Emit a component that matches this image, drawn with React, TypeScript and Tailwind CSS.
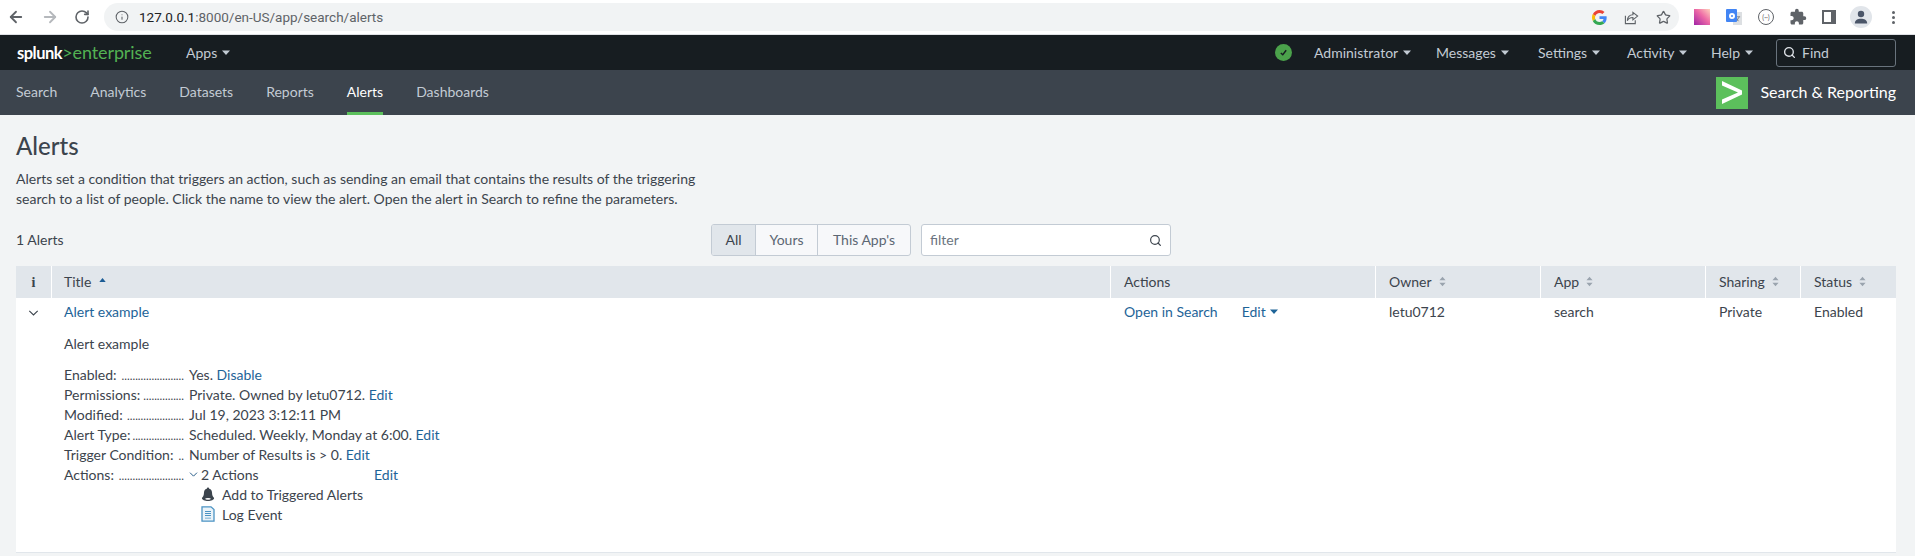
import React from "react";
import { ArrowLeft, ArrowRight, RotateCw, Info, Star, Search } from "lucide-react";
import { MdExtension } from "react-icons/md";

const Caret = ({ className = "" }: { className?: string }) => (
  <svg viewBox="0 0 10 6" className={"w-[8px] h-[5px] fill-current " + className}><path d="M0 0.5h10L5 6z" /></svg>
);

const Chevron = ({ className = "" }: { className?: string }) => (
  <svg viewBox="0 0 10 6" className={"fill-none stroke-current " + className} strokeWidth={1.1}><path d="M.8.8L5 5 9.200.8" /></svg>
);

const SortIcon = () => (
  <svg viewBox="0 0 8 12" className="w-[7px] h-[11px] fill-[#9aa4ae] ml-[7px]"><path d="M4 0.5L7.5 4.5H.5zM4 11.5L.5 7.5h7z" /></svg>
);

const TopItem = ({ label, w }: { label: string; w: string }) => (
  <div className={"flex items-center gap-[5px] " + w}>
    <span>{label}</span>
    <Caret />
  </div>
);

const Tab = ({ label, active }: { label: string; active?: boolean }) => (
  <div className={"relative h-full flex items-center pb-[3px] " + (active ? "text-white" : "text-[#c3cbd4]")}>
    {label}
    {active && <div className="absolute left-0 right-0 bottom-0 h-[3px] bg-[#5cc05c]" />}
  </div>
);

const Link = ({ children }: { children: React.ReactNode }) => <span className="text-[#1e6498]">{children}</span>;

const Detail = ({ label, dots, children }: { label: string; dots: string; children: React.ReactNode }) => (
  <div className="flex h-[20px] items-center">
    <div className="w-[120px] mr-[5px] flex justify-between items-baseline whitespace-pre shrink-0">
      <span>{label + ":"}</span>
      <span className="text-[11.500px]">{dots}</span>
    </div>
    <div className="whitespace-pre">{children}</div>
  </div>
);

const HeadCell = ({ label, sort = true, className = "" }: { label: string; sort?: boolean; className?: string }) => (
  <div className={"flex items-center pl-[13px] pb-[1px] bg-[#e1e6eb] " + className}>
    <span>{label}</span>
    {sort && <SortIcon />}
  </div>
);

export default function App() {
  return (
    <div className="w-[1915px] h-[556px] overflow-hidden bg-[#f2f4f5] text-[#3c444d] text-[14px]" style={{ fontFamily: "Lato, 'Liberation Sans', sans-serif" }}>
      {/* Browser bar */}
      <div className="h-[35px] bg-white flex items-center border-b border-[#dfe1e5] text-[#5f6368]">
        <ArrowLeft className="w-[18px] h-[18px] ml-[7px]" strokeWidth={2.4} />
        <ArrowRight className="w-[18px] h-[18px] ml-[16px] text-[#b5b8bc]" strokeWidth={2.4} />
        <RotateCw className="w-[16px] h-[16px] ml-[15px]" strokeWidth={2.4} />
        <div className="ml-[14px] w-[1575px] h-[28px] rounded-full bg-[#f1f3f4] flex items-center pl-[11px] pr-[8px]" style={{ fontFamily: "Roboto, sans-serif" }}>
          <Info className="w-[14px] h-[14px]" strokeWidth={1.8} />
          <span className="ml-[10px] text-[13.500px] text-[#202124]">127.0.0.1<span className="text-[#5f6368]">:8000/en-US/app/search/alerts</span></span>
          <div className="ml-auto flex items-center gap-[17px]">
            <svg viewBox="0 0 48 48" className="w-[15px] h-[15px]">
              <path fill="#EA4335" d="M24 9.5c3.5 0 6.7 1.2 9.2 3.6l6.9-6.9C35.9 2.4 30.5 0 24 0 14.6 0 6.5 5.4 2.6 13.3l8 6.2C12.4 13.7 17.700 9.5 24 9.5z" />
              <path fill="#4285F4" d="M46.900 24.500c0-1.600-.1-3.100-.4-4.500H24v9h12.900c-.6 3-2.200 5.500-4.700 7.200l7.700 6c4.500-4.200 7-10.300 7-17.700z" />
              <path fill="#FBBC05" d="M10.500 28.700c-.5-1.400-.8-3-.8-4.700s.3-3.200.8-4.700l-8-6.200C.9 16.300 0 20 0 24s.9 7.700 2.600 10.900l7.900-6.200z" />
              <path fill="#34A853" d="M24 48c6.500 0 11.900-2.100 15.900-5.800l-7.700-6c-2.100 1.400-4.900 2.300-8.200 2.300-6.300 0-11.600-4.200-13.500-9.900l-8 6.200C6.500 42.600 14.600 48 24 48z" />
            </svg>
            <svg viewBox="0 0 16 16" className="w-[15px] h-[15px] fill-none stroke-[#5f6368]" strokeWidth={1.2}>
              <path d="M9.500 2.500L14.500 6.500 9.500 10.500V8C6.500 8 4.500 9 3.500 11.500 3.500 7.500 6 5 9.500 5z" />
              <path d="M1.500 6v8.500h10.500V11" />
            </svg>
            <Star className="w-[15px] h-[15px]" strokeWidth={2} />
          </div>
        </div>
        <div className="ml-[15px] w-[16px] h-[16px]" style={{ background: "linear-gradient(45deg,#a023a6,#ee6aa6 55%,#ffd3bd)" }} />
        <div className="ml-[16px] relative w-[16px] h-[16px]">
          <div className="absolute right-0 bottom-0 w-[9px] h-[13px] bg-[#dcdfe2] flex items-center justify-center">
            <svg viewBox="0 0 8 8" className="w-[7px] h-[7px] fill-none stroke-[#7a7f85]" strokeWidth={1}><path d="M1 2h6M2 2l3 5M6 2L3 7" /></svg>
          </div>
          <div className="absolute left-0 top-0 w-[11px] h-[13px] bg-[#4285f4] rounded-[1px] z-10 flex items-center justify-center">
            <div className="w-[6px] h-[6px] rounded-full border-2 border-white" />
          </div>
        </div>
        <div className="ml-[16px] w-[16px] h-[16px] rounded-full border border-[#5f6368] flex items-center justify-center text-[7px] leading-none">(··)</div>
        <MdExtension className="ml-[15px] w-[18px] h-[18px] text-[#5f6368]" />
        <div className="ml-[15px] w-[14px] h-[14px] border-2 border-[#5f6368] flex justify-end"><div className="w-[3px] bg-[#5f6368]" /></div>
        <div className="ml-[14px] w-[22px] h-[22px] rounded-full bg-[#e1e5ea] flex items-center justify-center">
          <svg viewBox="0 0 14 14" className="w-[14px] h-[14px] fill-[#4a5568]">
            <circle cx="7" cy="4" r="3.200" />
            <path d="M.8 13.500c0-3.400 3-4.700 6.200-4.700s6.200 1.300 6.200 4.700z" />
          </svg>
        </div>
        <div className="ml-[20px] flex flex-col gap-[2px]">
          <div className="w-[3px] h-[3px] rounded-full bg-[#5f6368]" />
          <div className="w-[3px] h-[3px] rounded-full bg-[#5f6368]" />
          <div className="w-[3px] h-[3px] rounded-full bg-[#5f6368]" />
        </div>
      </div>

      {/* Splunk top bar */}
      <div className="h-[35px] bg-[#171d21] flex items-center text-[#c3cbd4]">
        <div className="ml-[17px] w-[169px] leading-none pb-[1px] whitespace-nowrap">
          <span className="text-white font-bold text-[16.500px] tracking-[-0.5px]">splunk</span><span className="text-[#53b253] text-[18px] tracking-[-0.1px]">&gt;enterprise</span>
        </div>
        <div className="flex items-center gap-[5px]"><span>Apps</span><Caret /></div>
        <div className="ml-auto flex items-center h-full">
          <div className="w-[17px] h-[17px] rounded-full bg-[#4ba24b] flex items-center justify-center mr-[22px]">
            <svg viewBox="0 0 10 10" className="w-[9px] h-[9px] fill-none stroke-[#171d21]" strokeWidth={1.6}><path d="M2 5.500L4.200 7.500 8 2.500" /></svg>
          </div>
          <TopItem label="Administrator" w="w-[122px]" />
          <TopItem label="Messages" w="w-[102px]" />
          <TopItem label="Settings" w="w-[89px]" />
          <TopItem label="Activity" w="w-[84px]" />
          <TopItem label="Help" w="w-[65px]" />
          <div className="w-[120px] h-[28px] rounded-[3px] border border-[#69737d] flex items-center pl-[6px] gap-[6px] mr-[19px]">
            <Search className="w-[13px] h-[13px] text-[#dfe3e8]" strokeWidth={2.5} />
            <span>Find</span>
          </div>
        </div>
      </div>

      {/* App bar */}
      <div className="h-[45px] bg-[#3c444d] flex items-center pl-[16px] text-[#c3cbd4]">
        <div className="flex items-center h-full gap-[33px]">
          <Tab label="Search" />
          <Tab label="Analytics" />
          <Tab label="Datasets" />
          <Tab label="Reports" />
          <Tab label="Alerts" active />
          <Tab label="Dashboards" />
        </div>
        <div className="ml-auto flex items-center mr-[19px]">
          <div className="w-[32px] h-[32px] bg-[#5cc05c]">
            <svg viewBox="0 0 32 32" className="w-[32px] h-[32px] fill-white"><path d="M6 4l20 9.500v4L6 27v-4.500l16-7L6 8.500z" /></svg>
          </div>
          <span className="ml-[12px] pb-[1px] text-white text-[16px]">Search &amp; Reporting</span>
        </div>
      </div>

      {/* Content */}
      <div className="px-[16px]">
        <h1 className="text-[24px] leading-[30px] pt-[16px] text-[#3c444d] font-medium">Alerts</h1>
        <p className="mt-[8px] w-[720px] leading-[20px]">
          Alerts set a condition that triggers an action, such as sending an email that contains the results of the triggering search to a list of people. Click the name to view the alert. Open the alert in Search to refine the parameters.
        </p>
        <div className="mt-[15px] h-[32px] flex items-center">
          <div className="w-[695px] pb-[2px]">1 Alerts</div>
          <div className="flex h-[32px] rounded-[3px] border border-[#c3cbd4] bg-[#f7f8fa] overflow-hidden">
            <div className="w-[44px] pb-[2px] flex items-center justify-center bg-[#e1e6eb] border-r border-[#c3cbd4]">All</div>
            <div className="w-[62px] pb-[2px] flex items-center justify-center border-r border-[#c3cbd4] text-[#5c6773]">Yours</div>
            <div className="w-[92px] pb-[2px] flex items-center justify-center text-[#5c6773]">This App's</div>
          </div>
          <div className="ml-[10px] w-[250px] h-[32px] rounded-[3px] border border-[#c3cbd4] bg-white flex items-center pl-[8px] pr-[8px] text-[#6b7580]">
            <span className="pb-[2px]">filter</span>
            <Search className="ml-auto w-[13px] h-[13px] text-[#3c444d]" strokeWidth={2.2} />
          </div>
        </div>

        {/* Table */}
        <div className="mt-[10px] w-[1880px] bg-white border-b border-[#e1e6eb]">
          <div className="grid grid-cols-[36px_1059px_265px_165px_165px_95px_95px] h-[32px]">
            <div className="flex items-center justify-center bg-[#e1e6eb] border-r border-white font-bold" style={{ fontFamily: "'Liberation Serif', serif" }}>i</div>
            <div className="flex items-center pl-[12px] pb-[1px] bg-[#e1e6eb] border-r border-white">
              <span>Title</span>
              <svg viewBox="0 0 8 5" className="w-[7px] h-[4px] fill-[#1c5d96] ml-[8px] mb-[4px]"><path d="M4 0l4 5H0z" /></svg>
            </div>
            <HeadCell label="Actions" sort={false} className="border-r border-white" />
            <HeadCell label="Owner" className="border-r border-white" />
            <HeadCell label="App" className="border-r border-white" />
            <HeadCell label="Sharing" className="border-r border-white" />
            <HeadCell label="Status" />
          </div>
          <div className="grid grid-cols-[36px_1059px_265px_165px_165px_95px_95px] h-[254px]">
            <div className="pl-[12px] pt-[12px]"><Chevron className="w-[11px] h-[6px] text-[#3c444d]" /></div>
            <div className="pl-[12px]">
              <div className="h-[29px] pb-[2px] flex items-center"><Link>Alert example</Link></div>
              <div className="mt-[6px] h-[20px] flex items-center">Alert example</div>
              <div className="mt-[11px]">
                <Detail label="Enabled" dots=".......................">Yes. <Link>Disable</Link></Detail>
                <Detail label="Permissions" dots="...............">Private. Owned by letu0712. <Link>Edit</Link></Detail>
                <Detail label="Modified" dots=".....................">Jul 19, 2023 3:12:11 PM</Detail>
                <Detail label="Alert Type" dots="...................">Scheduled. Weekly, Monday at 6:00. <Link>Edit</Link></Detail>
                <Detail label="Trigger Condition" dots="..">Number of Results is &gt; 0. <Link>Edit</Link></Detail>
                <Detail label="Actions" dots="........................">
                  <div className="flex items-center">
                    <Chevron className="w-[9px] h-[5px] text-[#17507f] mr-[3px]" />
                    <span className="w-[173px]">2 Actions</span>
                    <Link>Edit</Link>
                  </div>
                </Detail>
                <div className="flex h-[20px] items-center pl-[137px]">
                  <svg viewBox="0 0 14 16" className="w-[14px] h-[15px] fill-[#3c444d]">
                    <path d="M7 0.500a1.300 1.300 0 0 1 1.300 1.300c2.200.5 3 2.200 3 4.400 0 3 1 4.300 2.200 5.600 0 2-3.200 3.200-6.500 3.200S.5 13.800.5 11.800C1.700 10.500 2.700 9.200 2.700 6.200c0-2.200.8-3.900 3-4.400A1.300 1.300 0 0 1 7 .5z" />
                    <ellipse cx="7" cy="12.600" rx="3" ry="1" fill="#fff" />
                  </svg>
                  <span className="ml-[7px]">Add to Triggered Alerts</span>
                </div>
                <div className="flex h-[20px] items-center pl-[137px]">
                  <svg viewBox="0 0 14 16" className="w-[14px] h-[16px] fill-[#eaf3f9] stroke-[#4b93c3]" strokeWidth={1.3}>
                    <path d="M1 .8h9L13 3.500v11.700H1z" />
                    <path d="M4 5.500h6M4 7.500h6M4 9.500h6" strokeWidth={1.1} />
                    <path d="M4 12.200h6" strokeWidth={1.500} stroke="#9dc4de" />
                  </svg>
                  <span className="ml-[7px]">Log Event</span>
                </div>
              </div>
            </div>
            <div className="pl-[13px] h-[29px] pb-[2px] flex items-center">
              <Link>Open in Search</Link>
              <span className="ml-[24px] flex items-center gap-[4px] text-[#1e6498]">Edit <Caret /></span>
            </div>
            <div className="pl-[13px] h-[29px] pb-[2px] flex items-center">letu0712</div>
            <div className="pl-[13px] h-[29px] pb-[2px] flex items-center">search</div>
            <div className="pl-[13px] h-[29px] pb-[2px] flex items-center">Private</div>
            <div className="pl-[13px] h-[29px] pb-[2px] flex items-center">Enabled</div>
          </div>
        </div>
      </div>
    </div>
  );
}
